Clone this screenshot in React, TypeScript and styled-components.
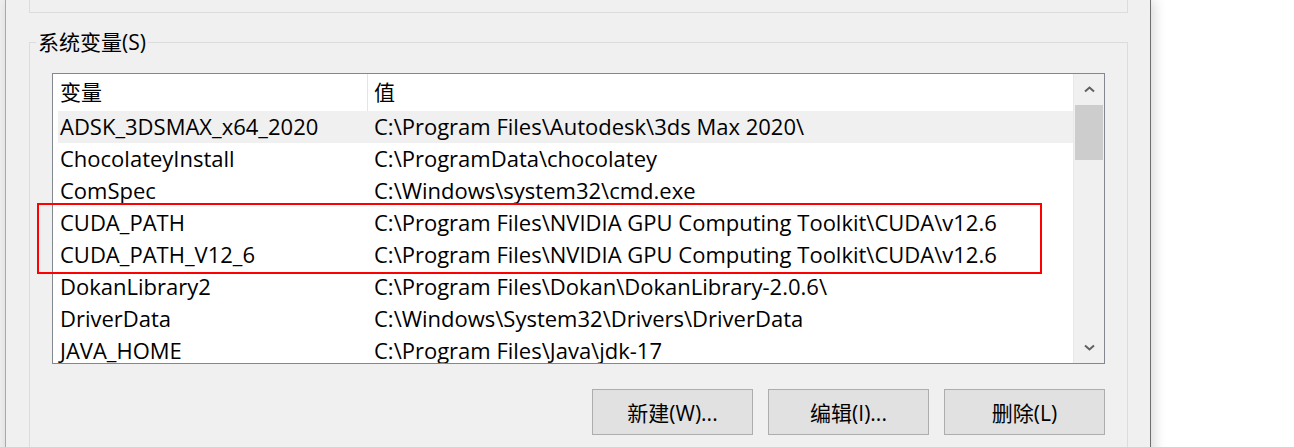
import React from "react";
import styled, { createGlobalStyle } from "styled-components";

const GlobalStyle = createGlobalStyle`
  html, body { margin: 0; padding: 0; background: #ffffff; }
  body { font-family: "Open Sans", "Noto Sans CJK SC", sans-serif; }
  * { box-sizing: border-box; }
`;

const FONT = `"Open Sans", "Noto Sans CJK SC", sans-serif`;

const Page = styled.div`
  position: relative;
  width: 1294px;
  height: 447px;
  overflow: hidden;
  display: flex;
  background: #ffffff;
  font-family: ${FONT};
  font-size: 22px;
  color: #000;
`;

const Gutter = styled.div`
  width: 5px;
  flex: none;
  background: #f0f0f0;
`;

const Window = styled.div`
  width: 1146px;
  flex: none;
  height: 470px;
  background: #f0f0f0;
  border-left: 1px solid #a9a9a9;
  border-right: 1px solid #6f6f6f;
  box-shadow: 3px 0 12px rgba(0, 0, 0, 0.16);
  padding: 0 22px 0 23px;
  display: flex;
  flex-direction: column;
`;

const TopGroup = styled.div`
  width: 1099px;
  height: 13px;
  flex: none;
  border: 1px solid #dcdcdc;
  border-top: none;
`;

const Group = styled.fieldset`
  width: 1099px;
  margin: 17px 0 0 0;
  padding: 19px 0 30px 0;
  border: 1px solid #dcdcdc;
  min-width: 0;
`;

const Legend = styled.legend`
  margin-left: 6px;
  padding: 0 2px;
  font-size: 21px;
  line-height: 24px;
`;

const GroupBody = styled.div`
  padding: 0 22px;
`;

const ListBox = styled.div`
  width: 1053px;
  height: 291px;
  border: 1px solid #828790;
  background: #ffffff;
  display: flex;
`;

const ListContent = styled.div`
  flex: 1;
  overflow: hidden;
  padding-left: 5px;
  border-right: 1px solid #e8e8e8;
`;

const Row = styled.div<{ $header?: boolean; $selected?: boolean }>`
  display: grid;
  grid-template-columns: 309px 1fr;
  height: ${(p) => (p.$header ? 37 : 32)}px;
  align-items: center;
  background: ${(p) => (p.$selected ? "#f0f0f0" : "#ffffff")};
  white-space: nowrap;
`;

const Cell = styled.div<{ $second?: boolean; $header?: boolean }>`
  height: 100%;
  display: flex;
  align-items: center;
  padding-left: ${(p) => (p.$second ? 6 : 2)}px;
  padding-bottom: ${(p) => (p.$header ? 3 : 2)}px;
  border-left: ${(p) => (p.$second && p.$header ? "1px solid #e5e5e5" : "none")};
  margin-left: ${(p) => (p.$second && !p.$header ? 1 : 0)}px;
  font-size: ${(p) => (p.$header ? 21 : 22)}px;
`;

const ScrollBar = styled.div`
  width: 30px;
  flex: none;
  background: #f0f0f0;
  display: flex;
  flex-direction: column;
`;

const ArrowButton = styled.div`
  height: 31px;
  flex: none;
  display: flex;
  align-items: center;
  justify-content: center;
`;

const Track = styled.div`
  flex: 1;
  padding: 0 1px;
`;

const Thumb = styled.div`
  height: 55px;
  background: #cdcdcd;
`;

const ButtonRow = styled.div`
  display: flex;
  justify-content: flex-end;
  gap: 15px;
  margin-top: 25px;
  width: 1053px;
`;

const Button = styled.button`
  width: 161px;
  height: 46px;
  background: #e1e1e1;
  border: 1px solid #adadad;
  font-family: ${FONT};
  font-size: 21px;
  color: #000;
  padding: 0;
`;

const Highlight = styled.div`
  position: absolute;
  left: 37px;
  top: 203px;
  width: 1005px;
  height: 71px;
  border: 2px solid #ff0000;
  pointer-events: none;
`;

const Chevron = ({ down }: { down?: boolean }) => (
  <svg width="11" height="7" viewBox="0 0 11 7">
    <path
      d={down ? "M1 1.5 L5.5 5.5 L10 1.5" : "M1 5.5 L5.5 1.5 L10 5.5"}
      fill="none"
      stroke="#606060"
      strokeWidth="2"
    />
  </svg>
);

const rows: [string, string][] = [
  ["ADSK_3DSMAX_x64_2020", "C:\\Program Files\\Autodesk\\3ds Max 2020\\"],
  ["ChocolateyInstall", "C:\\ProgramData\\chocolatey"],
  ["ComSpec", "C:\\Windows\\system32\\cmd.exe"],
  ["CUDA_PATH", "C:\\Program Files\\NVIDIA GPU Computing Toolkit\\CUDA\\v12.6"],
  ["CUDA_PATH_V12_6", "C:\\Program Files\\NVIDIA GPU Computing Toolkit\\CUDA\\v12.6"],
  ["DokanLibrary2", "C:\\Program Files\\Dokan\\DokanLibrary-2.0.6\\"],
  ["DriverData", "C:\\Windows\\System32\\Drivers\\DriverData"],
  ["JAVA_HOME", "C:\\Program Files\\Java\\jdk-17"],
];

export default function App() {
  return (
    <Page>
      <GlobalStyle />
      <Gutter />
      <Window>
        <TopGroup />
        <Group>
          <Legend>系统变量(S)</Legend>
          <GroupBody>
            <ListBox>
              <ListContent>
                <Row $header>
                  <Cell $header>变量</Cell>
                  <Cell $header $second>值</Cell>
                </Row>
                {rows.map(([name, value], i) => (
                  <Row key={name} $selected={i === 0}>
                    <Cell>{name}</Cell>
                    <Cell $second>{value}</Cell>
                  </Row>
                ))}
              </ListContent>
              <ScrollBar>
                <ArrowButton>
                  <Chevron />
                </ArrowButton>
                <Track>
                  <Thumb />
                </Track>
                <ArrowButton>
                  <Chevron down />
                </ArrowButton>
              </ScrollBar>
            </ListBox>
            <ButtonRow>
              <Button>新建(W)...</Button>
              <Button>编辑(I)...</Button>
              <Button>删除(L)</Button>
            </ButtonRow>
          </GroupBody>
        </Group>
      </Window>
      <Highlight />
    </Page>
  );
}
